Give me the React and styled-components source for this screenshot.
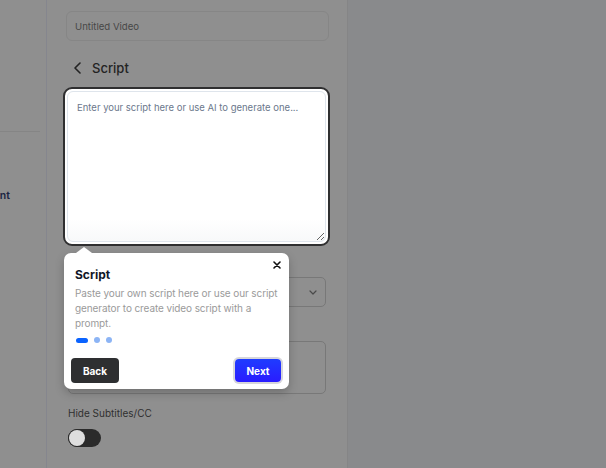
import React from "react";
import styled, { createGlobalStyle } from "styled-components";

const Global = createGlobalStyle`
  html, body { margin: 0; padding: 0; }
  body { font-family: Inter, "Noto Sans", sans-serif; background: #898a8c; }
  * { box-sizing: border-box; }
`;

const Page = styled.div`
  display: flex;
  height: 468px;
  overflow: hidden;
`;

const Sidebar = styled.aside`
  width: 47px;
  flex-shrink: 0;
  background: #8f8f8f;
  border-right: 1px solid #85868e;
  overflow: hidden;
  padding-top: 131px;
`;

const SideDivider = styled.div`
  width: 40px;
  height: 1px;
  background: #858585;
`;

const NavItem = styled.div`
  width: 10px;
  margin-top: 56px;
  display: flex;
  justify-content: flex-end;
  white-space: nowrap;
  font-size: 10.5px;
  line-height: 16px;
  font-weight: 600;
  color: #1b2442;
`;

const Panel = styled.section`
  width: 301px;
  flex-shrink: 0;
  background: #8f8f8f;
  border-right: 1px solid #858586;
  padding: 11px 18px 0 19px;
  display: flex;
  flex-direction: column;
`;

const Rest = styled.div`
  flex: 1;
  background: #898a8c;
`;

const TitleInput = styled.div`
  height: 30px;
  border: 1px solid #868686;
  border-radius: 6px;
  padding: 0 8px;
  display: flex;
  align-items: center;
  font-size: 9.6px;
  color: #474747;
`;

const HeadingRow = styled.div`
  margin-top: 17px;
  height: 20px;
  display: flex;
  align-items: center;
  gap: 11px;
  padding-left: 8px;
  font-size: 13px;
  font-weight: 500;
  color: #232323;
`;

const Spotlight = styled.div`
  position: relative;
  z-index: 10;
  margin: 9px -1px 0 -3px;
  border: 2px solid #2f2f30;
  border-radius: 9px;
  padding: 2px;
  background: #ffffff;
`;

const ScriptArea = styled.textarea`
  display: block;
  width: 100%;
  height: 151px;
  border: 1px solid #dfe5ec;
  border-radius: 6px;
  padding: 8px 9px;
  font-family: Inter, "Noto Sans", sans-serif;
  font-size: 9.5px;
  line-height: 16px;
  color: #1f2937;
  resize: vertical;
  outline: none;
  background: linear-gradient(#ffffff 85%, #f8f9fa);
  &::placeholder { color: #6b788c; }
`;

const Tooltip = styled.div`
  position: absolute;
  top: calc(100% + 9px);
  left: -1px;
  width: 225px;
  height: 136px;
  background: #ffffff;
  border-radius: 7px;
  box-shadow: 0 4px 10px rgba(0, 0, 0, 0.22);
  display: flex;
  flex-direction: column;
  &::before {
    content: "";
    position: absolute;
    top: -6px;
    left: 12px;
    border-left: 8px solid transparent;
    border-right: 8px solid transparent;
    border-bottom: 6px solid #ffffff;
  }
`;

const CloseBtn = styled.button`
  position: absolute;
  top: 8px;
  right: 8px;
  width: 8px;
  height: 8px;
  padding: 0;
  border: none;
  background: none;
  display: flex;
  cursor: pointer;
`;

const TipBody = styled.div`
  padding: 14px 8px 0 11px;
`;

const TipTitle = styled.div`
  font-size: 12px;
  line-height: 16px;
  font-weight: 700;
  color: #111827;
`;

const TipText = styled.p`
  margin: 3px 0 0;
  font-size: 10px;
  letter-spacing: -0.1px;
  line-height: 15px;
  color: #9a9a9a;
`;

const Dots = styled.div`
  display: flex;
  gap: 6px;
  align-items: center;
  margin: 6px 0 0 1px;
`;

const Dot = styled.span`
  width: ${(p) => (p.$active ? "12px" : "6px")};
  height: ${(p) => (p.$active ? "5px" : "6px")};
  border-radius: 4px;
  background: ${(p) => (p.$active ? "#0a63ff" : "#8cb4f5")};
`;

const TipFooter = styled.div`
  margin-top: auto;
  padding: 0 8px 6px 7px;
  display: flex;
  justify-content: space-between;
  align-items: center;
`;

const TipButton = styled.button`
  border: none;
  font-family: Inter, "Noto Sans", sans-serif;
  font-size: 10px;
  font-weight: 700;
  color: #ffffff;
  cursor: pointer;
  width: ${(p) => (p.$primary ? "46px" : "48px")};
  height: ${(p) => (p.$primary ? "23px" : "25px")};
  border-radius: 4px;
  background: ${(p) =>
    p.$primary ? "linear-gradient(180deg, #1f3cff, #2a1cff)" : "#2e2f31"};
  box-shadow: ${(p) => (p.$primary ? "0 0 0 2px #d6d6db" : "none")};
`;

const Field = styled.div`
  margin: ${(p) => p.$mt}px 3px 0 2px;
  display: flex;
  flex-direction: column;
`;

const FieldLabel = styled.div`
  font-size: 10px;
  line-height: 14px;
  color: #2f2f2f;
`;

const SelectBox = styled.div`
  height: ${(p) => p.$h}px;
  border: 1px solid #787878;
  border-radius: 5px;
  display: flex;
  align-items: center;
  justify-content: flex-end;
  padding-right: 8px;
`;

const Toggle = styled.div`
  margin: 9px 0 0 2px;
  width: 33px;
  height: 18px;
  border-radius: 9px;
  background: #2b2b2b;
  padding: 1px;
  display: flex;
`;

const Knob = styled.span`
  width: 16px;
  height: 16px;
  border-radius: 50%;
  background: #dedede;
  box-shadow: 0 0 0 1px #2b2b2b;
`;

export default function App() {
  return (
    <>
      <Global />
      <Page>
        <Sidebar>
          <SideDivider />
          <NavItem>Placement</NavItem>
        </Sidebar>
        <Panel>
          <TitleInput>Untitled Video</TitleInput>
          <HeadingRow>
            <svg width="7" height="12" viewBox="0 0 7 12" fill="none">
              <path d="M6 1L1 6l5 5" stroke="#232323" strokeWidth="1.6" strokeLinecap="round" strokeLinejoin="round" />
            </svg>
            Script
          </HeadingRow>
          <Spotlight>
            <ScriptArea placeholder="Enter your script here or use AI to generate one..." />
            <Tooltip>
              <CloseBtn aria-label="Close">
                <svg width="8" height="8" viewBox="0 0 8 8">
                  <path d="M1 1l6 6M7 1L1 7" stroke="#111" strokeWidth="1.6" strokeLinecap="round" />
                </svg>
              </CloseBtn>
              <TipBody>
                <TipTitle>Script</TipTitle>
                <TipText>
                  Paste your own script here or use our script generator to create video script with a prompt.
                </TipText>
                <Dots>
                  <Dot $active />
                  <Dot />
                  <Dot />
                </Dots>
              </TipBody>
              <TipFooter>
                <TipButton>Back</TipButton>
                <TipButton $primary>Next</TipButton>
              </TipFooter>
            </Tooltip>
          </Spotlight>
          <Field $mt={31}>
            <SelectBox $h={30}>
              <svg width="8" height="5" viewBox="0 0 8 5" fill="none">
                <path d="M1 1l3 3 3-3" stroke="#4a4a4a" strokeWidth="1.2" strokeLinecap="round" strokeLinejoin="round" />
              </svg>
            </SelectBox>
          </Field>
          <Field $mt={34}>
            <SelectBox $h={53} />
          </Field>
          <Field $mt={12}>
            <FieldLabel>Hide Subtitles/CC</FieldLabel>
          </Field>
          <Toggle>
            <Knob />
          </Toggle>
        </Panel>
        <Rest />
      </Page>
    </>
  );
}
